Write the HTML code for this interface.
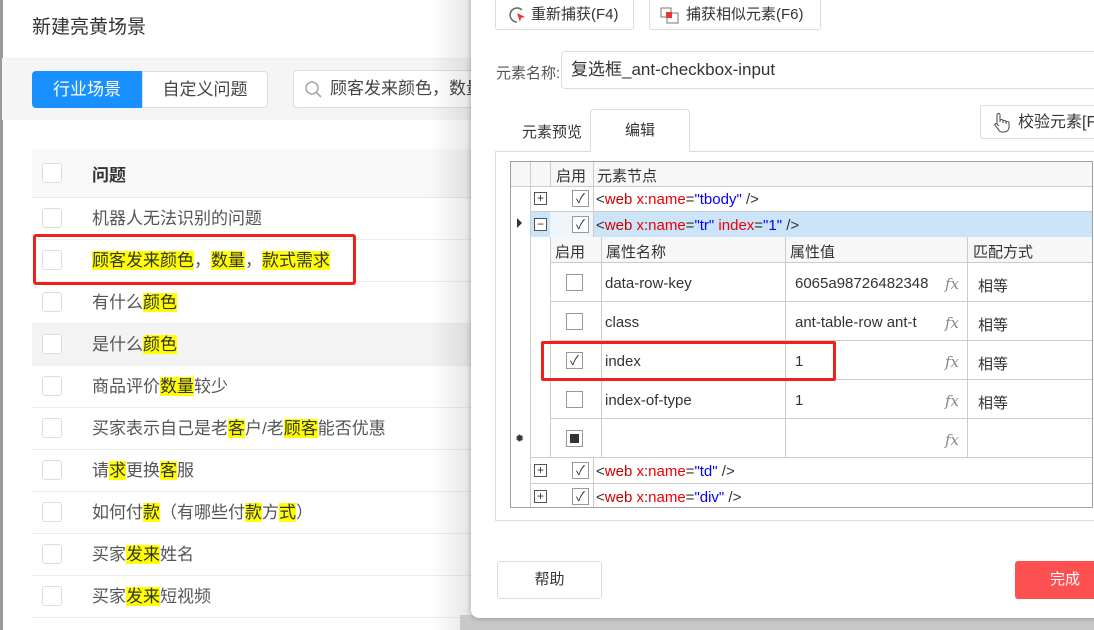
<!DOCTYPE html>
<html><head><meta charset="utf-8"><style>
*{box-sizing:border-box;margin:0;padding:0}
body{width:1094px;height:630px;overflow:hidden;position:relative;background:#fff;font-family:"Liberation Sans","Noto Sans CJK SC",sans-serif;color:#555}
.a{position:absolute}
.cb{position:absolute;width:20px;height:20px;border:1px solid #ddd;border-radius:3px;background:#fff}
.hl{background:#ff0;color:#333}
.row{position:absolute;left:32px;width:460px;height:42px;border-bottom:1px solid #eee;font-size:17px;line-height:42px}
.row span.t{position:absolute;left:60px}
.row .cb{left:10px;top:10px}
.btn{position:absolute;border:1px solid #ddd;border-radius:3px;background:#fff;font-size:15px;color:#333}
.g{position:absolute;border-color:#ccc;border-style:solid;border-width:0}
.ck{position:absolute;width:17px;height:17px;border:1px solid #999;background:#fff;font-size:13px;line-height:15px;text-align:center;color:#333}
.x{font-size:15px;color:#333;position:absolute;white-space:nowrap;margin-top:2px}
.r{color:#c00}.b{color:#00f}.rr{color:#e00}
.fx{position:absolute;left:945px;font-style:italic;color:#888;font-family:"DejaVu Serif",serif;font-size:15px;margin-top:2px}
</style></head><body>
<div class="a" style="left:0;top:0;width:3px;height:630px;background:#999"></div>
<div class="a" style="left:32px;top:12px;font-size:19px;color:#333">新建亮黄场景</div>
<div class="a" style="left:2px;top:58px;width:470px;height:62px;background:#f5f5f5;border-top:1px solid #eee"></div>
<div class="a" style="left:32px;top:71px;width:110px;height:37px;background:#1890ff;color:#fff;border-radius:4px 0 0 4px;font-size:17px;line-height:37px;text-align:center">行业场景</div>
<div class="a" style="left:142px;top:71px;width:126px;height:37px;background:#fff;border:1px solid #ddd;border-radius:0 4px 4px 0;font-size:17px;line-height:35px;text-align:center;color:#444">自定义问题</div>
<div class="a" style="left:293px;top:70px;width:200px;height:38px;background:#fff;border:1px solid #ddd;border-radius:4px;font-size:17px;line-height:36px;padding-left:36px;color:#444;white-space:nowrap;overflow:hidden">顾客发来颜色，数量</div>
<svg class="a" style="left:304px;top:80px" width="20" height="20"><circle cx="8" cy="8" r="6" fill="none" stroke="#aaa" stroke-width="1.6"/><line x1="12.5" y1="12.5" x2="17" y2="17" stroke="#aaa" stroke-width="1.8"/></svg>
<div class="a" style="left:32px;top:149px;width:440px;height:49px;background:#f8f8f8;border-bottom:1px solid #e8e8e8"></div>
<div class="cb" style="left:42px;top:163px"></div>
<div class="a" style="left:92px;top:161px;font-size:17px;font-weight:bold;color:#333">问题</div>
<div class="row" style="top:198px"><div class="cb"></div><span class="t">机器人无法识别的问题</span></div>
<div class="row" style="top:240px"><div class="cb"></div><span class="t"><span class="hl">顾客发来颜色</span>，<span class="hl">数量</span>，<span class="hl">款式需求</span></span></div>
<div class="row" style="top:282px"><div class="cb"></div><span class="t">有什么<span class="hl">颜色</span></span></div>
<div class="row" style="top:324px;background:#f3f3f3"><div class="cb"></div><span class="t">是什么<span class="hl">颜色</span></span></div>
<div class="row" style="top:366px"><div class="cb"></div><span class="t">商品评价<span class="hl">数量</span>较少</span></div>
<div class="row" style="top:408px"><div class="cb"></div><span class="t">买家表示自己是老<span class="hl">客</span>户/老<span class="hl">顾客</span>能否优惠</span></div>
<div class="row" style="top:450px"><div class="cb"></div><span class="t">请<span class="hl">求</span>更换<span class="hl">客</span>服</span></div>
<div class="row" style="top:492px"><div class="cb"></div><span class="t">如何付<span class="hl">款</span>（有哪些付<span class="hl">款</span>方<span class="hl">式</span>）</span></div>
<div class="row" style="top:534px"><div class="cb"></div><span class="t">买家<span class="hl">发来</span>姓名</span></div>
<div class="row" style="top:576px"><div class="cb"></div><span class="t">买家<span class="hl">发来</span>短视频</span></div>
<div class="a" style="left:33px;top:234px;width:323px;height:51px;border:3px solid #f0201a;border-radius:3px"></div>
<div class="a" style="left:430px;top:0;width:42px;height:630px;background:linear-gradient(90deg,rgba(0,0,0,0),rgba(0,0,0,.1))"></div>
<div class="a" style="left:460px;top:615px;width:634px;height:15px;background:#c8c8c8"></div>
<!-- dialog -->
<div class="a" style="left:471px;top:-10px;width:640px;height:628px;background:#fff;border-radius:8px;box-shadow:0 0 6px rgba(0,0,0,.3)"></div>
<div class="btn" style="left:495px;top:-2px;width:139px;height:32px;line-height:32px;padding-left:35px">重新捕获(F4)</div>
<svg class="a" style="left:508px;top:6px" width="20" height="20"><path d="M14 4A7 7 0 1 0 9 16" fill="none" stroke="#666" stroke-width="1.5"/><path d="M9 7l8 4-4 1-1 4z" fill="#e33"/></svg>
<div class="btn" style="left:649px;top:-2px;width:172px;height:32px;line-height:32px;padding-left:36px">捕获相似元素(F6)</div>
<svg class="a" style="left:660px;top:6px" width="20" height="20"><rect x="1" y="2" width="10" height="9" fill="none" stroke="#777"/><rect x="7" y="7" width="11" height="10" fill="none" stroke="#777"/><rect x="6" y="6" width="6" height="6" fill="#e33"/></svg>
<div class="a" style="left:496px;top:62px;font-size:15px;color:#555">元素名称:</div>
<div class="a" style="left:561px;top:51px;width:540px;height:38px;border:1px solid #ddd;border-radius:4px;font-size:17px;line-height:36px;padding-left:9px;color:#333">复选框_ant-checkbox-input</div>
<div class="a" style="left:522px;top:121px;font-size:15px;color:#333">元素预览</div>
<div class="a" style="left:590px;top:109px;width:100px;height:43px;border:1px solid #ddd;border-bottom:none;border-radius:4px 4px 0 0;background:#fff;font-size:15px;line-height:42px;text-align:center;color:#333;z-index:2">编辑</div>
<div class="btn" style="left:980px;top:105px;width:130px;height:34px;line-height:34px;padding-left:37px;font-size:16px">校验元素[F</div>
<svg class="a" style="left:991px;top:112px" width="20" height="22"><path d="M6 12V3a1.5 1.5 0 0 1 3 0v7M9 9a1.5 1.5 0 0 1 3 0v2M12 10a1.5 1.5 0 0 1 3 0v2M15 11a1.5 1.5 0 0 1 3 0v4c0 3-2 5-5 5h-2c-2 0-3-1-4-3l-3-4c-.6-1 .8-2 2-1l2 2" fill="none" stroke="#555" stroke-width="1.1"/></svg>
<div class="a" style="left:495px;top:151px;width:610px;height:370px;border:1px solid #ddd"></div>
<!-- grid -->
<div class="a" style="left:510px;top:161px;width:583px;height:347px;border:1px solid #a0a0a0;background:#fff"></div>
<div class="a" style="left:511px;top:162px;width:581px;height:25px;background:#f7f7f7;border-bottom:1px solid #ccc"></div>
<div class="g" style="left:530px;top:162px;height:345px;border-left-width:1px"></div>
<div class="g" style="left:550px;top:162px;height:25px;border-left-width:1px"></div>
<div class="g" style="left:593px;top:162px;height:75px;border-left-width:1px"></div>
<div class="g" style="left:593px;top:458px;height:49px;border-left-width:1px"></div>
<div class="x" style="left:556px;top:163px">启用</div><div class="x" style="left:597px;top:163px">元素节点</div>
<div class="g" style="left:531px;top:211px;width:561px;border-top-width:1px"></div>
<div class="a" style="left:531px;top:212px;width:19px;height:25px;background:#cce4f7"></div>
<div class="a" style="left:550px;top:212px;width:43px;height:25px;background:#eef6fc"></div>
<div class="a" style="left:594px;top:212px;width:498px;height:25px;background:#cce4f7"></div>
<div class="a" style="left:517px;top:218px;width:0;height:0;border-left:5px solid #333;border-top:5px solid transparent;border-bottom:5px solid transparent"></div>
<div class="ck" style="left:534px;top:192px;width:13px;height:13px;font-size:12px;line-height:11px;border-color:#555">+</div>
<div class="ck" style="left:534px;top:218px;width:13px;height:13px;font-size:12px;line-height:11px;border-color:#555">−</div>
<div class="ck" style="left:572px;top:190px">✓</div>
<div class="ck" style="left:572px;top:216px">✓</div>
<div class="x" style="left:596px;top:189px">&lt;<span class="r">web</span> <span class="rr">x</span>:<span class="rr">name</span>=<span class="b">"tbody"</span> /&gt;</div>
<div class="x" style="left:596px;top:215px">&lt;<span class="r">web</span> <span class="rr">x</span>:<span class="rr">name</span>=<span class="b">"tr"</span> <span class="rr">index</span>=<span class="b">"1"</span> /&gt;</div>
<!-- sub grid -->
<div class="a" style="left:550px;top:237px;width:542px;height:26px;background:#f7f7f7;border-bottom:1px solid #ccc"></div>
<div class="g" style="left:550px;top:237px;height:221px;border-left-width:1px"></div>
<div class="g" style="left:601px;top:237px;height:221px;border-left-width:1px"></div>
<div class="g" style="left:785px;top:237px;height:221px;border-left-width:1px"></div>
<div class="g" style="left:967px;top:237px;height:221px;border-left-width:1px"></div>
<div class="x" style="left:555px;top:239px">启用</div><div class="x" style="left:606px;top:239px">属性名称</div><div class="x" style="left:790px;top:239px">属性值</div><div class="x" style="left:973px;top:239px">匹配方式</div>
<div class="g" style="left:550px;top:301px;width:542px;border-top-width:1px"></div>
<div class="g" style="left:550px;top:340px;width:542px;border-top-width:1px"></div>
<div class="g" style="left:550px;top:379px;width:542px;border-top-width:1px"></div>
<div class="g" style="left:550px;top:418px;width:542px;border-top-width:1px"></div>
<div class="g" style="left:531px;top:457px;width:561px;border-top-width:1px"></div>
<div class="g" style="left:531px;top:483px;width:561px;border-top-width:1px"></div>
<div class="ck" style="left:566px;top:274px"></div><div class="x" style="left:605px;top:273px">data-row-key</div><div class="x" style="left:795px;top:273px;width:140px;overflow:hidden">6065a98726482348</div><div class="fx" style="top:273px">fx</div><div class="x" style="left:978px;top:273px">相等</div>
<div class="ck" style="left:566px;top:313px"></div><div class="x" style="left:605px;top:312px">class</div><div class="x" style="left:795px;top:312px;width:138px;overflow:hidden">ant-table-row ant-t</div><div class="fx" style="top:312px">fx</div><div class="x" style="left:978px;top:312px">相等</div>
<div class="ck" style="left:566px;top:352px">✓</div><div class="x" style="left:605px;top:351px">index</div><div class="x" style="left:795px;top:351px">1</div><div class="fx" style="top:351px">fx</div><div class="x" style="left:978px;top:351px">相等</div>
<div class="ck" style="left:566px;top:391px"></div><div class="x" style="left:605px;top:390px">index-of-type</div><div class="x" style="left:795px;top:390px">1</div><div class="fx" style="top:390px">fx</div><div class="x" style="left:978px;top:390px">相等</div>
<div class="ck" style="left:566px;top:430px"><div style="width:9px;height:9px;background:#333;margin:3px"></div></div><div class="fx" style="top:429px">fx</div>
<div class="x" style="left:515px;top:430px;font-size:11px">✹</div>
<div class="a" style="left:541px;top:341px;width:295px;height:40px;border:3px solid #f0201a;border-radius:2px"></div>
<div class="ck" style="left:534px;top:464px;width:13px;height:13px;font-size:12px;line-height:11px;border-color:#555">+</div>
<div class="ck" style="left:534px;top:490px;width:13px;height:13px;font-size:12px;line-height:11px;border-color:#555">+</div>
<div class="ck" style="left:572px;top:462px">✓</div><div class="ck" style="left:572px;top:488px">✓</div>
<div class="x" style="left:596px;top:461px">&lt;<span class="r">web</span> <span class="rr">x</span>:<span class="rr">name</span>=<span class="b">"td"</span> /&gt;</div>
<div class="x" style="left:596px;top:487px">&lt;<span class="r">web</span> <span class="rr">x</span>:<span class="rr">name</span>=<span class="b">"div"</span> /&gt;</div>
<div class="btn" style="left:497px;top:561px;width:105px;height:38px;line-height:36px;text-align:center">帮助</div>
<div class="a" style="left:1015px;top:561px;width:100px;height:38px;background:#fe5050;border-radius:3px;color:#fff;font-size:15px;line-height:38px;padding-left:35px">完成</div>
</body></html>
